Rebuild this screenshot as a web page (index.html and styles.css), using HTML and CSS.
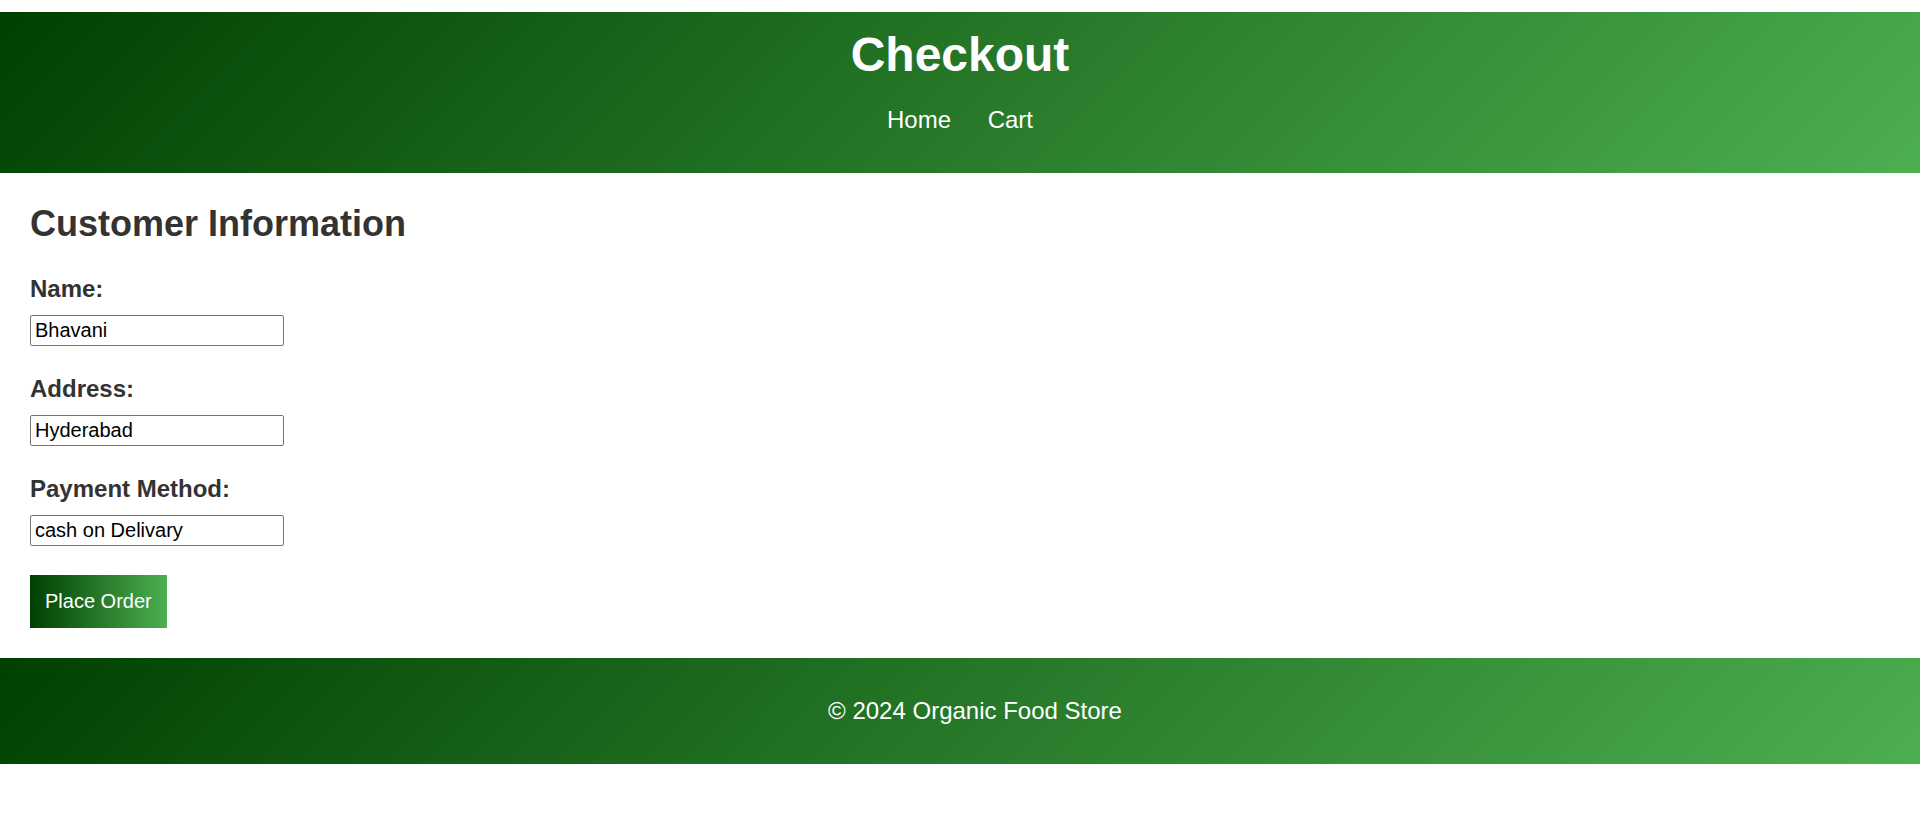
FILE: index.html
```html
<!DOCTYPE html>
<html lang="en">
<head>
<meta charset="utf-8">
<title>Checkout</title>
<link rel="stylesheet" href="styles.css">
</head>
<body>
<header class="site-header">
  <h1 class="site-title">Checkout</h1>
  <nav class="site-nav">
    <a href="#" class="nav-link">Home</a>
    <a href="#" class="nav-link">Cart</a>
  </nav>
</header>
<main class="content">
  <h2 class="section-title">Customer Information</h2>
  <form class="checkout-form">
    <label class="field-label" for="name">Name:</label>
    <input class="field-input" id="name" type="text" value="Bhavani">
    <label class="field-label" for="address">Address:</label>
    <input class="field-input" id="address" type="text" value="Hyderabad">
    <label class="field-label" for="payment">Payment Method:</label>
    <input class="field-input" id="payment" type="text" value="cash on Delivary">
    <button class="order-btn" type="button">Place Order</button>
  </form>
</main>
<footer class="site-footer">
  <p class="footer-text">© 2024 Organic Food Store</p>
</footer>
</body>
</html>
```

FILE: styles.css
```css
html, body {
  margin: 0;
  padding: 0;
  background: #fff;
}
body {
  font-family: "Liberation Sans", Arial, sans-serif;
  color: #333;
}
.site-header {
  margin-top: 12px;
  padding: 15px 0;
  background: linear-gradient(135deg, #004000, #4caf50);
  color: #fff;
  text-align: center;
}
.site-title {
  margin: 0;
  font-size: 48px;
  line-height: 55px;
  font-weight: bold;
}
.site-nav {
  margin: 24px 0;
  font-size: 24px;
  line-height: 28px;
}
.nav-link {
  color: #fff;
  text-decoration: none;
  margin: 0 15px;
}
.content {
  padding: 30px;
}
.section-title {
  margin: 0 0 31px;
  font-size: 36px;
  line-height: 41px;
  font-weight: bold;
  color: #333;
}
.checkout-form {
  display: flex;
  flex-direction: column;
  align-items: flex-start;
}
.field-label {
  display: block;
  font-size: 24px;
  line-height: 27px;
  font-weight: bold;
  color: #333;
  margin-bottom: 13px;
}
.field-input {
  box-sizing: border-box;
  width: 254px;
  height: 31px;
  padding: 3px 4px;
  margin: 0 0 29px;
  font-family: "Liberation Sans", Arial, sans-serif;
  font-size: 20px;
  color: #000;
  border: 1px solid #767676;
  border-radius: 2px;
  background: #fff;
}
.order-btn {
  padding: 15px;
  border: none;
  margin: 0;
  font-family: "Liberation Sans", Arial, sans-serif;
  font-size: 20px;
  line-height: 23px;
  color: #fff;
  background: linear-gradient(to right, #004000, #4caf50);
  cursor: pointer;
}
.site-footer {
  padding: 15px 0 15px 30px;
  background: linear-gradient(135deg, #004000, #4caf50);
  color: #fff;
  text-align: center;
}
.footer-text {
  margin: 24px 0;
  font-size: 24px;
  line-height: 28px;
}
```
